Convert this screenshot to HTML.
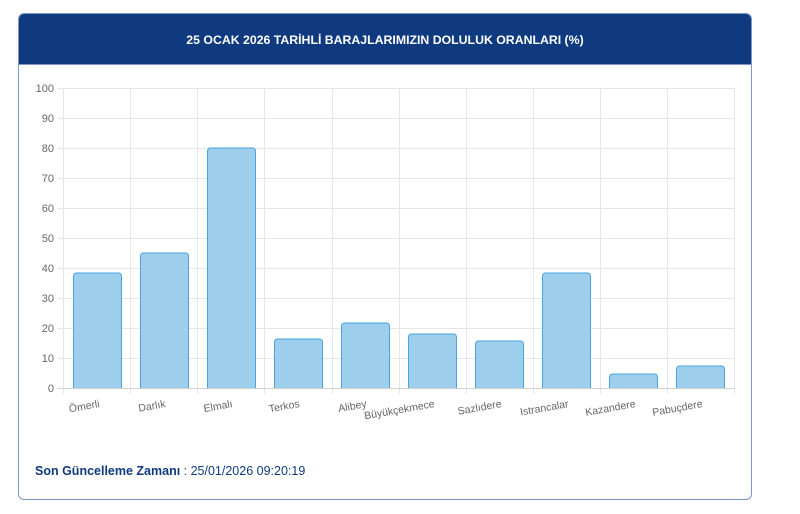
<!DOCTYPE html>
<html><head><meta charset="utf-8"><style>
body{margin:0;width:800px;height:514px;background:#fff;font-family:"Liberation Sans",sans-serif;position:relative;overflow:hidden}
.card{position:absolute;left:18px;top:13px;width:732px;height:485px;border:1px solid #7d97c9;border-radius:6px;overflow:hidden}
.hdr{height:50px;background:#0f3a80;color:#fff;font-weight:bold;font-size:12.3px;text-align:center;line-height:52px;border-bottom:1px solid #7d97c9}
.foot{position:absolute;left:35px;top:464px;font-size:12.5px;color:#0f3a80}
</style></head><body>
<div class="card"><div class="hdr">25 OCAK 2026 TARİHLİ BARAJLARIMIZIN DOLULUK ORANLARI (%)</div></div>
<svg width="800" height="514" style="position:absolute;left:0;top:0" font-family="Liberation Sans, sans-serif">
<g stroke="#e6e6e6" stroke-width="1">
<line x1="58" y1="88.5" x2="735" y2="88.5"/><line x1="58" y1="118.5" x2="735" y2="118.5"/><line x1="58" y1="148.5" x2="735" y2="148.5"/><line x1="58" y1="178.5" x2="735" y2="178.5"/><line x1="58" y1="208.5" x2="735" y2="208.5"/><line x1="58" y1="238.5" x2="735" y2="238.5"/><line x1="58" y1="268.5" x2="735" y2="268.5"/><line x1="58" y1="298.5" x2="735" y2="298.5"/><line x1="58" y1="328.5" x2="735" y2="328.5"/><line x1="58" y1="358.5" x2="735" y2="358.5"/>
<line x1="63.5" y1="88" x2="63.5" y2="394"/><line x1="130.5" y1="88" x2="130.5" y2="394"/><line x1="197.5" y1="88" x2="197.5" y2="394"/><line x1="264.5" y1="88" x2="264.5" y2="394"/><line x1="332.5" y1="88" x2="332.5" y2="394"/><line x1="399.5" y1="88" x2="399.5" y2="394"/><line x1="466.5" y1="88" x2="466.5" y2="394"/><line x1="533.5" y1="88" x2="533.5" y2="394"/><line x1="600.5" y1="88" x2="600.5" y2="394"/><line x1="667.5" y1="88" x2="667.5" y2="394"/><line x1="734.5" y1="88" x2="734.5" y2="394"/>
</g>
<line x1="58" y1="388.5" x2="735" y2="388.5" stroke="#d0d0d0"/>
<g font-size="11" fill="#666" text-anchor="end">
<text x="54" y="92">100</text><text x="54" y="122">90</text><text x="54" y="152">80</text><text x="54" y="182">70</text><text x="54" y="212">60</text><text x="54" y="242">50</text><text x="54" y="272">40</text><text x="54" y="302">30</text><text x="54" y="332">20</text><text x="54" y="362">10</text><text x="54" y="392">0</text>
</g>
<g fill="#9dcfec" stroke="#4aa3de" stroke-width="1">
<path d="M73.5 388V276a3 3 0 0 1 3-3h42a3 3 0 0 1 3 3V388"/>
<path d="M140.5 388V256a3 3 0 0 1 3-3h42a3 3 0 0 1 3 3V388"/>
<path d="M207.5 388V151a3 3 0 0 1 3-3h42a3 3 0 0 1 3 3V388"/>
<path d="M274.5 388V342a3 3 0 0 1 3-3h42a3 3 0 0 1 3 3V388"/>
<path d="M341.5 388V326a3 3 0 0 1 3-3h42a3 3 0 0 1 3 3V388"/>
<path d="M408.5 388V337a3 3 0 0 1 3-3h42a3 3 0 0 1 3 3V388"/>
<path d="M475.5 388V344a3 3 0 0 1 3-3h42a3 3 0 0 1 3 3V388"/>
<path d="M542.5 388V276a3 3 0 0 1 3-3h42a3 3 0 0 1 3 3V388"/>
<path d="M609.5 388V377a3 3 0 0 1 3-3h42a3 3 0 0 1 3 3V388"/>
<path d="M676.5 388V369a3 3 0 0 1 3-3h42a3 3 0 0 1 3 3V388"/>
</g>
<g font-size="10.5" fill="#666" text-anchor="end">
<text transform="translate(100,407) rotate(-10)">Ömerli</text>
<text transform="translate(166,407) rotate(-10)">Darlık</text>
<text transform="translate(233,407) rotate(-10)">Elmalı</text>
<text transform="translate(300,407) rotate(-10)">Terkos</text>
<text transform="translate(367,407) rotate(-10)">Alibey</text>
<text transform="translate(435,407) rotate(-10)">Büyükçekmece</text>
<text transform="translate(502,407) rotate(-10)">Sazlıdere</text>
<text transform="translate(569,407) rotate(-10)">Istrancalar</text>
<text transform="translate(636,407) rotate(-10)">Kazandere</text>
<text transform="translate(703,407) rotate(-10)">Pabuçdere</text>
</g>
</svg>
<div class="foot"><b>Son Güncelleme Zamanı</b> : 25/01/2026 09:20:19</div>
</body></html>
